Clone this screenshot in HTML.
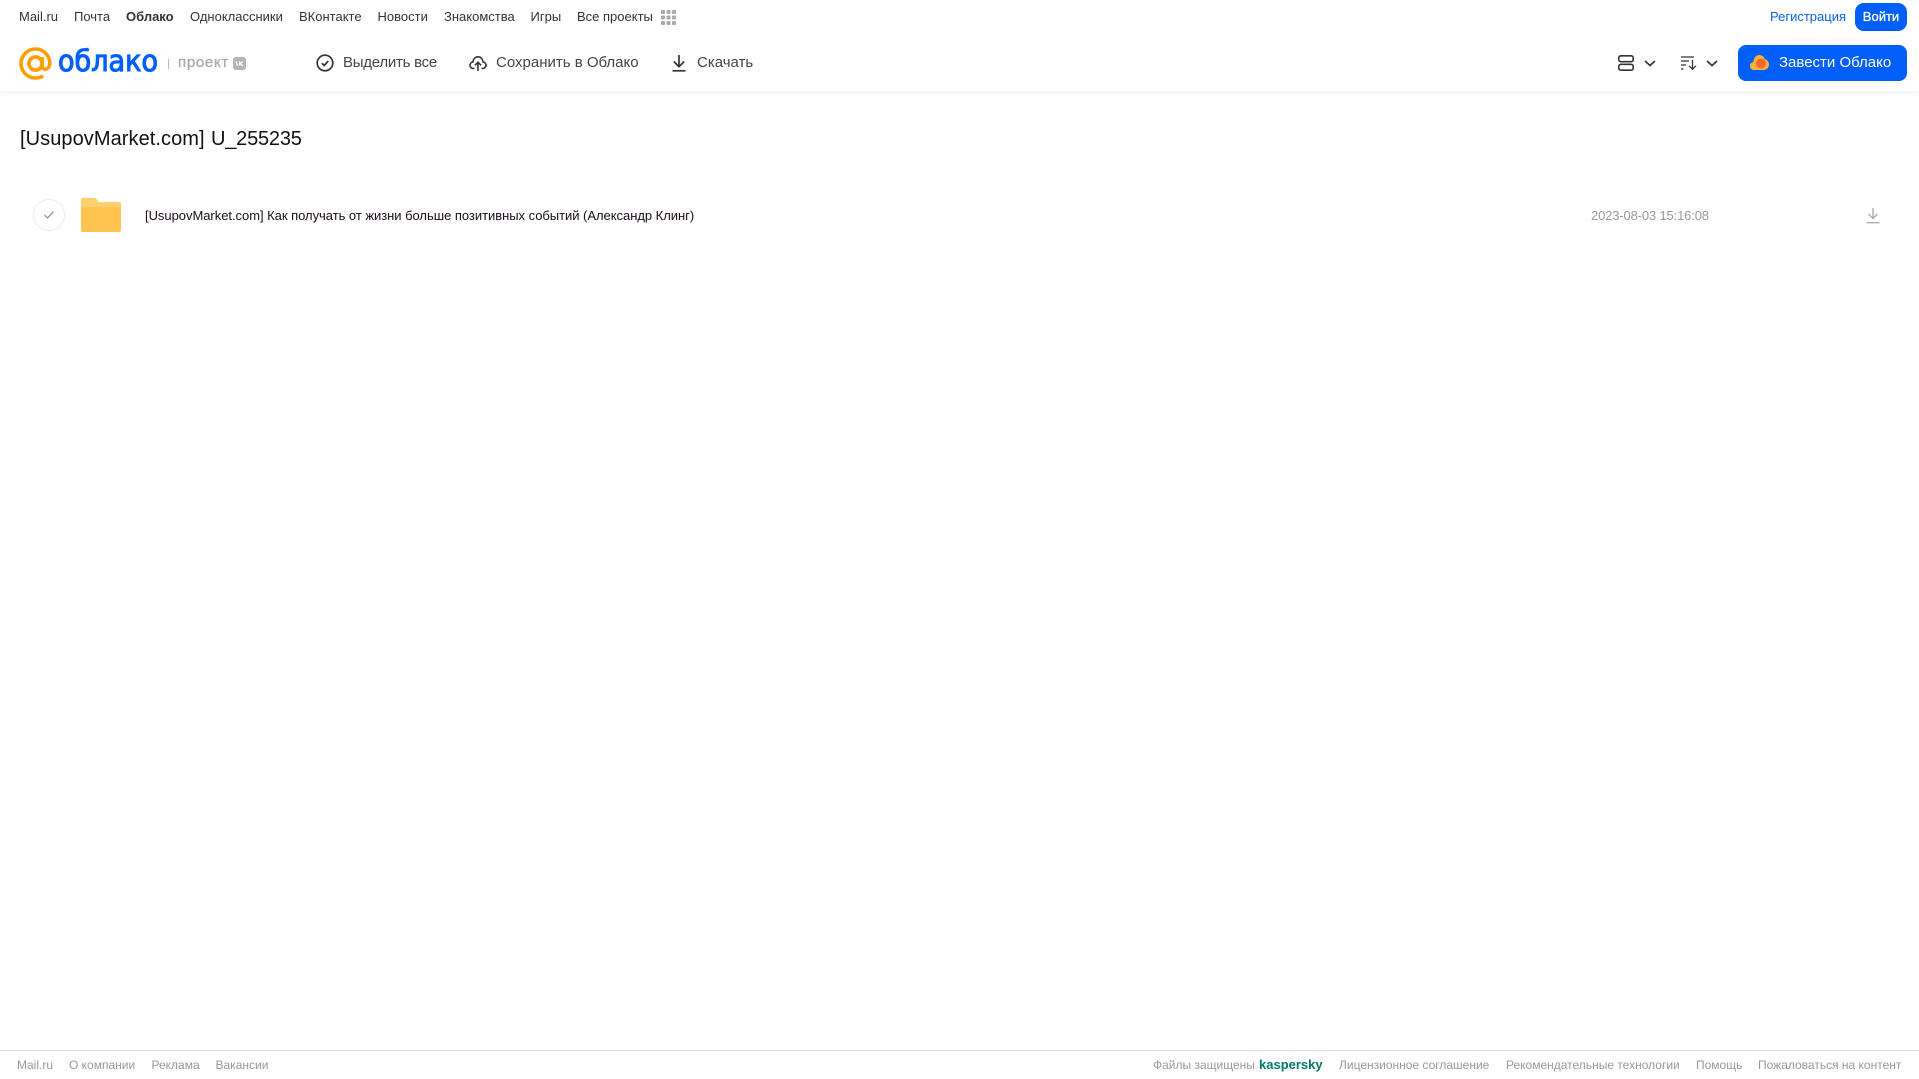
<!DOCTYPE html>
<html lang="ru"><head><meta charset="utf-8"><title>Облако</title>
<style>
html,body{margin:0;padding:0;background:#fff;width:1919px;height:1079px;overflow:hidden;font-family:"Liberation Sans",sans-serif}
.t{position:absolute;white-space:nowrap;line-height:20px}
.n{top:7px;font-size:13px;color:#333}
.b{top:53px;font-size:15px;color:#444}
.f{top:1055px;font-size:12px;color:#999}
svg{position:absolute;overflow:visible}
#hd{position:absolute;left:0;top:0;width:1919px;height:91px;background:#fff;box-shadow:0 1px 8px rgba(0,0,0,.07)}
</style></head><body>
<div id="hd"></div>
<span class="t n" style="left:19px">Mail.ru</span>
<span class="t n" style="left:74px">Почта</span>
<span class="t n" style="left:126px;font-weight:bold">Облако</span>
<span class="t n" style="left:190px">Одноклассники</span>
<span class="t n" style="left:299px">ВКонтакте</span>
<span class="t n" style="left:377.500px">Новости</span>
<span class="t n" style="left:444px">Знакомства</span>
<span class="t n" style="left:530.500px">Игры</span>
<span class="t n" style="left:577px">Все проекты</span>
<svg style="left:661px;top:10px" width="15" height="15" fill="#aaa"><rect x="0" y="0" width="4" height="4" rx="1"/><rect x="5.5" y="0" width="4" height="4" rx="1"/><rect x="11" y="0" width="4" height="4" rx="1"/><rect x="0" y="5.5" width="4" height="4" rx="1"/><rect x="5.5" y="5.5" width="4" height="4" rx="1"/><rect x="11" y="5.5" width="4" height="4" rx="1"/><rect x="0" y="11" width="4" height="4" rx="1"/><rect x="5.5" y="11" width="4" height="4" rx="1"/><rect x="11" y="11" width="4" height="4" rx="1"/></svg>
<span class="t n" style="left:1770px;color:#0a62e0">Регистрация</span>
<div style="position:absolute;left:1855px;top:3px;width:52px;height:28px;border-radius:9px;background:#005ff9"></div>
<span class="t" style="left:1855px;top:7px;width:52px;text-align:center;font-size:13px;color:#fff;-webkit-text-stroke:.3px #fff">Войти</span>

<svg style="left:19px;top:47px" width="33" height="33" viewBox="0 0 33 33" fill="none" stroke="#ff9e00" stroke-width="3.6"><circle cx="16.5" cy="16.5" r="6.6"/><path d="M23.1 10v8.4c0 5.6 7.6 5 7.6-2.2C30.700 8.300 24.300 2 16.500 2 8.500 2 2 8.500 2 16.500S8.500 31 16.500 31c3 0 5.400-.7 7.600-2.100"/></svg>
<svg style="left:58px;top:42px" width="102" height="40"><text x="0" y="29" font-family="DejaVu Sans" font-size="29" fill="#005ff9" stroke="#005ff9" stroke-width="1.100" textLength="100" lengthAdjust="spacingAndGlyphs">облако</text></svg>
<div style="position:absolute;left:168px;top:59px;width:1px;height:10px;background:#bbb"></div>
<span class="t" style="left:178px;top:53px;font-size:15px;color:#aaa;letter-spacing:.7px;-webkit-text-stroke:.35px #aaa">проект</span>
<div style="position:absolute;left:233px;top:57px;width:13px;height:13px;border-radius:3px;background:#b4b4b4"></div>
<svg style="left:233px;top:57px" width="13" height="13" fill="none" stroke="#fff" stroke-width="1.300"><path d="M3 4.500l1.500 4M6.500 4.500v4M10 4.500L7 6.500l3 2.500"/></svg>

<svg style="left:316px;top:54px" width="18" height="18" viewBox="0 0 18 18" fill="none" stroke="#333" stroke-width="1.700"><circle cx="9" cy="9" r="7.800"/><path d="M5.800 9.200l2.300 2.300 4.200-4.500"/></svg>
<span class="t b" style="left:343px;letter-spacing:-.25px">Выделить все</span>
<svg style="left:469px;top:54px" width="18" height="18" viewBox="0 0 18 18" fill="none" stroke="#333" stroke-width="1.600"><path d="M5.500 14.500H4.300C2.400 14.500 1 13 1 11.300 1 9.600 2.300 8.300 3.800 8.100 4.200 4.900 6.300 2.800 9 2.800s4.800 2.100 5.200 5.300c1.500.2 2.800 1.500 2.800 3.200 0 1.700-1.400 3.200-3.300 3.200h-1.200"/><path d="M9 17V8.500M5.900 11.300L9 8.200l3.100 3.100"/></svg>
<span class="t b" style="left:496px">Сохранить в Облако</span>
<svg style="left:671px;top:54px" width="16" height="18" viewBox="0 0 16 18" fill="none" stroke="#333" stroke-width="1.700"><path d="M8 1v11.500M2.800 7.500L8 12.700l5.200-5.200M1.500 16.800h13"/></svg>
<span class="t b" style="left:697px">Скачать</span>

<svg style="left:1618px;top:55px" width="16" height="16" viewBox="0 0 16 16" fill="none" stroke="#333" stroke-width="1.600"><rect x=".8" y=".8" width="14.400" height="5.900" rx="2"/><rect x=".8" y="9.300" width="14.400" height="5.900" rx="2"/></svg>
<svg style="left:1644px;top:60px" width="12" height="7" fill="none" stroke="#333" stroke-width="1.700"><path d="M1 1l5 4.500L11 1"/></svg>
<svg style="left:1681px;top:56px" width="16" height="14" viewBox="0 0 16 14" fill="none" stroke="#333" stroke-width="1.300"><path d="M0 1h13M0 5h8M0 9h5M0 13h2.500M11.500 4v9M8 9.800l3.500 3.400L15 9.800"/></svg>
<svg style="left:1706px;top:60px" width="12" height="7" fill="none" stroke="#333" stroke-width="1.700"><path d="M1 1l5 4.500L11 1"/></svg>

<div style="position:absolute;left:1738px;top:45px;width:169px;height:36px;border-radius:8px;background:#005ff9"></div>
<svg style="left:1750px;top:54px" width="19" height="16" viewBox="0 0 19 16"><path fill="#ffb03a" d="M4 16C1.800 16 0 14.200 0 12s1.500-3.700 3.300-4C3.800 3.500 6.400 1 9 1c2.800 0 5 1.700 5.800 4.300C17.200 5.800 19 7.800 19 10.400 19 13.500 16.700 16 13.500 16z"/><circle cx="11" cy="9.500" r="5" fill="#f2682a"/></svg>
<span class="t" style="left:1779px;top:53px;font-size:15px;color:#fff">Завести Облако</span>

<span class="t" style="left:20px;top:127px;line-height:24px;font-size:20px;color:#111;letter-spacing:.07px">[UsupovMarket.com]</span>
<span class="t" style="left:211px;top:127px;line-height:24px;font-size:20px;color:#111;letter-spacing:-.2px">U_255235</span>

<div style="position:absolute;left:33px;top:199px;width:30px;height:30px;border:1px solid #ececec;border-radius:50%"></div>
<svg style="left:43px;top:210px" width="12" height="10" fill="none" stroke="#999" stroke-width="1.300"><path d="M1.500 5l3 3 6-6.500"/></svg>
<svg style="left:81px;top:198px" width="40" height="34" viewBox="0 0 40 34"><path fill="#ffc350" d="M2 0h11c1.500 0 2.300.6 3.200 1.700L17.500 4H38c1.200 0 2 .8 2 2v26c0 1.200-.8 2-2 2H2c-1.200 0-2-.8-2-2V2C0 .8.800 0 2 0z"/><path fill="#ffcf70" d="M0 2C0 .8.800 0 2 0h11c1.500 0 2.300.6 3.200 1.700L17.500 4H38c1.200 0 2 .8 2 2v3H0z"/></svg>
<span class="t" style="left:145px;top:206px;font-size:13px;color:#1a0a1c;letter-spacing:-.035px">[UsupovMarket.com] Как получать от жизни больше позитивных событий (Александр Клинг)</span>
<span class="t" style="left:1591px;top:206px;font-size:13px;color:#999;letter-spacing:-.15px">2023-08-03 15:16:08</span>
<svg style="left:1866px;top:207px" width="14" height="17" viewBox="0 0 14 17" fill="none" stroke="#aaa" stroke-width="1.400"><path d="M7 1v10.500M2.500 7l4.500 4.500L11.500 7M.5 15.700h13"/></svg>

<div style="position:absolute;left:0;top:1050px;width:1919px;height:1px;background:#d9d9d9"></div>
<span class="t f" style="left:17px">Mail.ru</span>
<span class="t f" style="left:69px">О компании</span>
<span class="t f" style="left:151.500px">Реклама</span>
<span class="t f" style="left:215.500px">Вакансии</span>
<span class="t f" style="left:1153px">Файлы защищены</span>
<span class="t f" style="left:1259px;font-size:13px;font-weight:bold;color:#00796b">kaspersky</span>
<span class="t f" style="left:1339px">Лицензионное соглашение</span>
<span class="t f" style="left:1506px">Рекомендательные технологии</span>
<span class="t f" style="left:1696px">Помощь</span>
<span class="t f" style="left:1758px">Пожаловаться на контент</span>
</body></html>
